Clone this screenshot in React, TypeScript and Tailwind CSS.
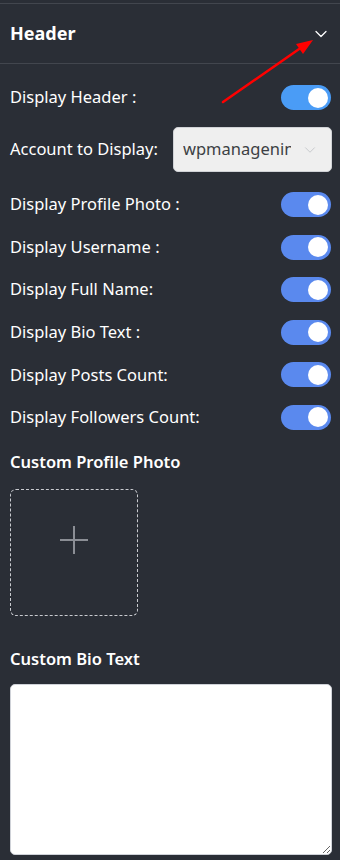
import { ChevronDown } from 'lucide-react'

type Row = { label: string; on: boolean; tone?: 'light' }

const toggles: Row[] = [
  { label: 'Display Profile Photo :', on: true },
  { label: 'Display Username :', on: true },
  { label: 'Display Full Name:', on: true },
  { label: 'Display Bio Text :', on: true },
  { label: 'Display Posts Count:', on: true },
  { label: 'Display Followers Count:', on: true },
]

function Toggle({ light }: { light?: boolean }) {
  return (
    <div
      className={`flex h-[25px] w-[50px] items-center justify-end rounded-full px-[3px] ${
        light ? 'bg-[#4a9cf6]' : 'bg-[#5a89ee]'
      }`}
    >
      <span className="h-[20px] w-[20px] rounded-full bg-white" />
    </div>
  )
}

export default function App() {
  return (
    <div
      className="relative h-[860px] w-[340px] overflow-hidden bg-[#2a2e36] text-white"
      style={{ fontFamily: '"Noto Sans", "Open Sans", sans-serif' }}
    >
      <div className="h-[3px]" />
      <div className="border-t border-[#42464e]">
        <div className="flex h-[59px] items-center justify-between pl-[10px] pr-[9px]">
          <h2 className="text-[18px] font-bold">Header</h2>
          <ChevronDown className="h-5 w-5 text-white" strokeWidth={1.5} />
        </div>
      </div>

      <div className="border-t border-[#42464e] pl-[10px] pr-[9px] pt-[21px]">
        <div className="flex h-[25px] items-center justify-between">
          <span className="text-[16.5px]">Display Header :</span>
          <Toggle light />
        </div>

        <div className="mt-[17px] flex items-center justify-between">
          <span className="text-[16.5px]">Account to Display:</span>
          <div className="-mr-px flex h-[45px] w-[159px] items-center justify-between rounded-[5px] border border-[#d0d2d6] bg-[#efefef] pl-[9px] pr-[12px]">
            <span className="w-[108px] overflow-hidden whitespace-nowrap text-[16.5px] text-[#3c3f44]">wpmanagening</span>
            <ChevronDown className="h-[18px] w-[18px] text-[#c4c6ca]" strokeWidth={1.25} />
          </div>
        </div>

        <div className="mt-[20px] flex flex-col gap-[17.6px]">
          {toggles.map((row) => (
            <div key={row.label} className="flex h-[25px] items-center justify-between">
              <span className="text-[16.5px]">{row.label}</span>
              <Toggle />
            </div>
          ))}
        </div>

        <h3 className="mt-[20px] text-[16.5px] font-semibold">Custom Profile Photo</h3>
        <div className="mt-[14px] flex h-[127px] w-[128px] items-center justify-center rounded-[6px] border border-dashed border-[#c9cbd0] pb-[24px]">
          <svg width="30" height="30" viewBox="0 0 30 30" className="text-[#8b8e95]">
            <path d="M15 1v28M1 15h28" stroke="currentColor" strokeWidth="2" />
          </svg>
        </div>

        <h3 className="mt-[31px] text-[16.5px] font-semibold">Custom Bio Text</h3>
        <textarea className="mt-[13px] block h-[171px] w-[322px] rounded-[5px] border border-[#cfd2d8] bg-white" />
      </div>

      <svg className="pointer-events-none absolute left-0 top-0" width="340" height="120" viewBox="0 0 340 120">
        <line x1="223" y1="102" x2="302" y2="47" stroke="#ff0000" strokeWidth="2.5" strokeLinecap="round" />
        <polygon points="313,40 296,44 303,54" fill="#ff0000" />
      </svg>
    </div>
  )
}
